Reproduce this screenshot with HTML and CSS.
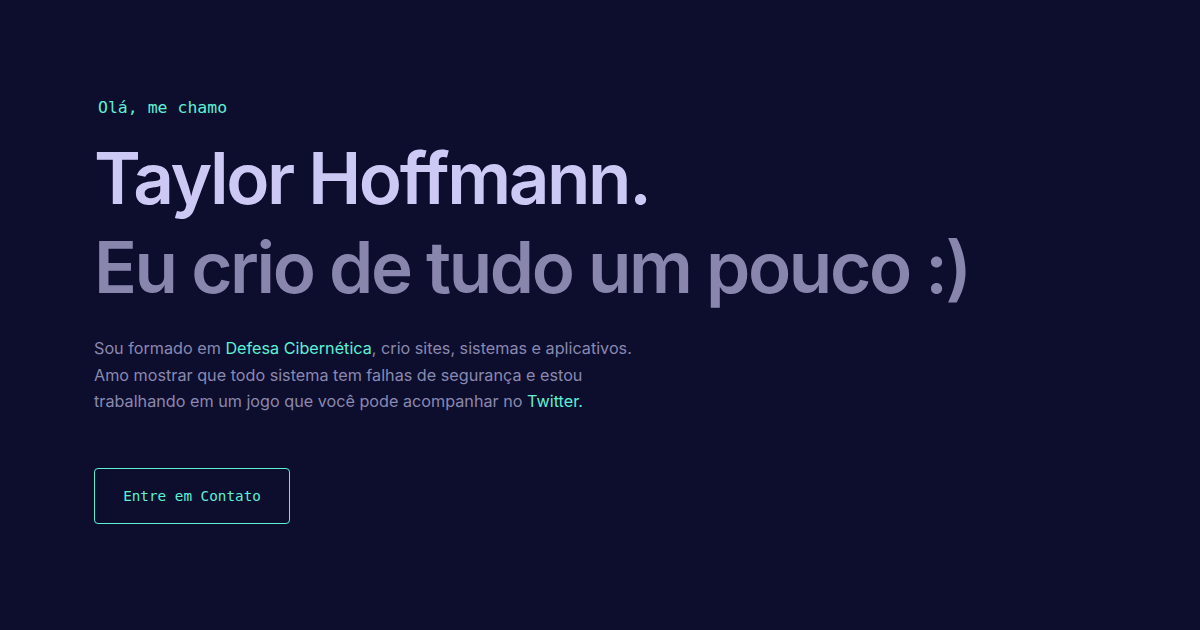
FILE: index.html
```html
<!DOCTYPE html>
<html lang="pt">
<head>
<meta charset="utf-8">
<link rel="stylesheet" href="styles.css">
</head>
<body>
<main class="hero">
  <p class="intro">Olá, me chamo</p>
  <h1 class="name">Taylor Hoffmann.</h1>
  <h2 class="tagline">Eu crio de tudo um pouco :)</h2>
  <p class="about">Sou formado em <span class="hl">Defesa Cibernética</span>, crio sites, sistemas e aplicativos. Amo mostrar que todo sistema tem falhas de segurança e estou trabalhando em um jogo que você pode acompanhar no <span class="hl">Twitter.</span></p>
  <a class="cta">Entre em Contato</a>
</main>
</body>
</html>
```
FILE: styles.css
```css
html, body {
  margin: 0;
  height: 100%;
  background: #0d0d2e;
}
.hero {
  display: flex;
  flex-direction: column;
  align-items: flex-start;
  padding: 96px 0 0 94px;
}
.intro {
  margin: 0 0 0 4px;
  font-family: "DejaVu Sans Mono", monospace;
  font-size: 16.5px;
  line-height: 24px;
  color: #5ef0d3;
}
.name, .tagline {
  margin: 0;
  font-family: Inter, sans-serif;
  font-weight: 600;
  font-size: 71px;
  line-height: 89px;
  letter-spacing: -2.4px;
}
.name {
  margin-top: 14px;
  color: #ccc9f5;
}
.tagline {
  color: #8886ad;
}
.about {
  margin: 23px 0 0;
  max-width: 545px;
  font-family: Inter, sans-serif;
  font-size: 16.2px;
  line-height: 26.5px;
  color: #8a89ae;
}
.hl {
  color: #5ef0d3;
}
.cta {
  margin-top: 53px;
  width: 194px;
  height: 54px;
  display: flex;
  align-items: center;
  justify-content: center;
  border: 1px solid #5ef0d3;
  border-radius: 4px;
  font-family: "DejaVu Sans Mono", monospace;
  font-size: 14.3px;
  color: #5ef0d3;
}
```
